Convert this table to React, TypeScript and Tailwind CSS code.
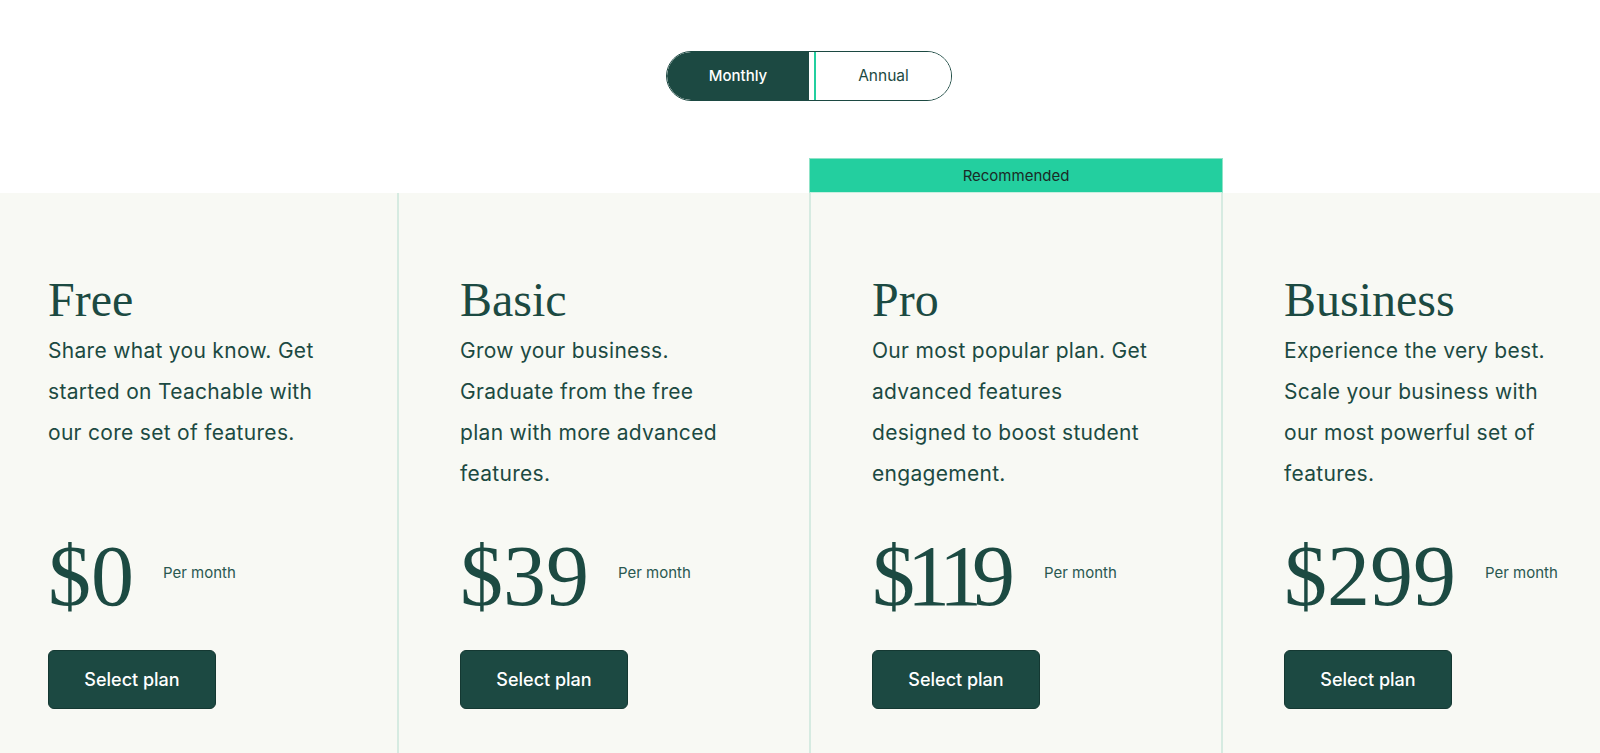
import React from "react";

type Plan = {
  name: string;
  lines: string[];
  price: React.ReactNode;
  recommended?: boolean;
};

const plans: Plan[] = [
  {
    name: "Free",
    lines: ["Share what you know. Get", "started on Teachable with", "our core set of features."],
    price: "$0",
  },
  {
    name: "Basic",
    lines: ["Grow your business.", "Graduate from the free", "plan with more advanced", "features."],
    price: "$39",
  },
  {
    name: "Pro",
    lines: ["Our most popular plan. Get", "advanced features", "designed to boost student", "engagement."],
    price: (
      <>
        <span className="tracking-[-8px]">$</span>
        <span className="tracking-[-11px]">1</span>
        <span className="tracking-[-10px]">1</span>
        <span>9</span>
      </>
    ),
    recommended: true,
  },
  {
    name: "Business",
    lines: ["Experience the very best.", "Scale your business with", "our most powerful set of", "features."],
    price: "$299",
  },
];

export default function App() {
  return (
    <div className="w-full min-h-[753px] bg-white overflow-hidden font-['Inter',sans-serif] text-[#1c4a42]">
      <div className="w-[1648px] ml-[-15px]">
        <div className="flex justify-center pt-[51px]">
          <div className="flex h-[50px] rounded-full border border-[#1c4942] overflow-hidden">
            <button className="w-[142px] bg-[#1c4942] text-white text-[15px] font-medium rounded-l-full">
              Monthly
            </button>
            <div className="w-[5px] bg-white" />
            <div className="w-[2px] bg-[#23cf9f]" />
            <button className="w-[135px] bg-white text-[#1c4942] text-[15.5px]">Annual</button>
          </div>
        </div>

        <div className="flex mt-[92px] bg-[#f8f9f4] min-h-[560px]">
          {plans.map((p, i) => (
            <div
              key={p.name}
              className={
                i === 0
                  ? "relative w-[412px] shrink-0 pl-[63px] pt-[83px]"
                  : "relative w-[412px] shrink-0 pl-[61px] pt-[83px] border-l-2 border-[#d6ebe1]"
              }
            >
              {p.recommended && (
                <div className="absolute bottom-full left-[-2px] w-[414px] h-[35px] flex items-center justify-center bg-[#23cf9f] border border-[#8fe3c7] border-b-[#c8efe0] text-[15px] text-[#1a2b27]">
                  <span className="mt-[2px]">Recommended</span>
                </div>
              )}
              <h2 className="font-['Liberation_Serif',serif] text-[48px] leading-[48px] font-normal">{p.name}</h2>
              <p className="mt-[6px] h-[164px] text-[21px] leading-[41px] tracking-[0.3px]">
                {p.lines.map((l) => (
                  <span key={l} className="block whitespace-nowrap">
                    {l}
                  </span>
                ))}
              </p>
              <div className="mt-[39px] flex items-start gap-[29px]">
                <div className="font-['Liberation_Serif',serif] text-[86px] leading-[86px] whitespace-nowrap">
                  {p.price}
                </div>
                <div className="mt-[28px] text-[15px] leading-[24px] text-[#2a5850]">Per month</div>
              </div>
              <button className="mt-[31px] w-[168px] h-[59px] rounded-[6px] bg-[#1c4942] border border-[#143832] text-white text-[18px] font-medium">
                Select plan
              </button>
            </div>
          ))}
        </div>
      </div>
    </div>
  );
}
